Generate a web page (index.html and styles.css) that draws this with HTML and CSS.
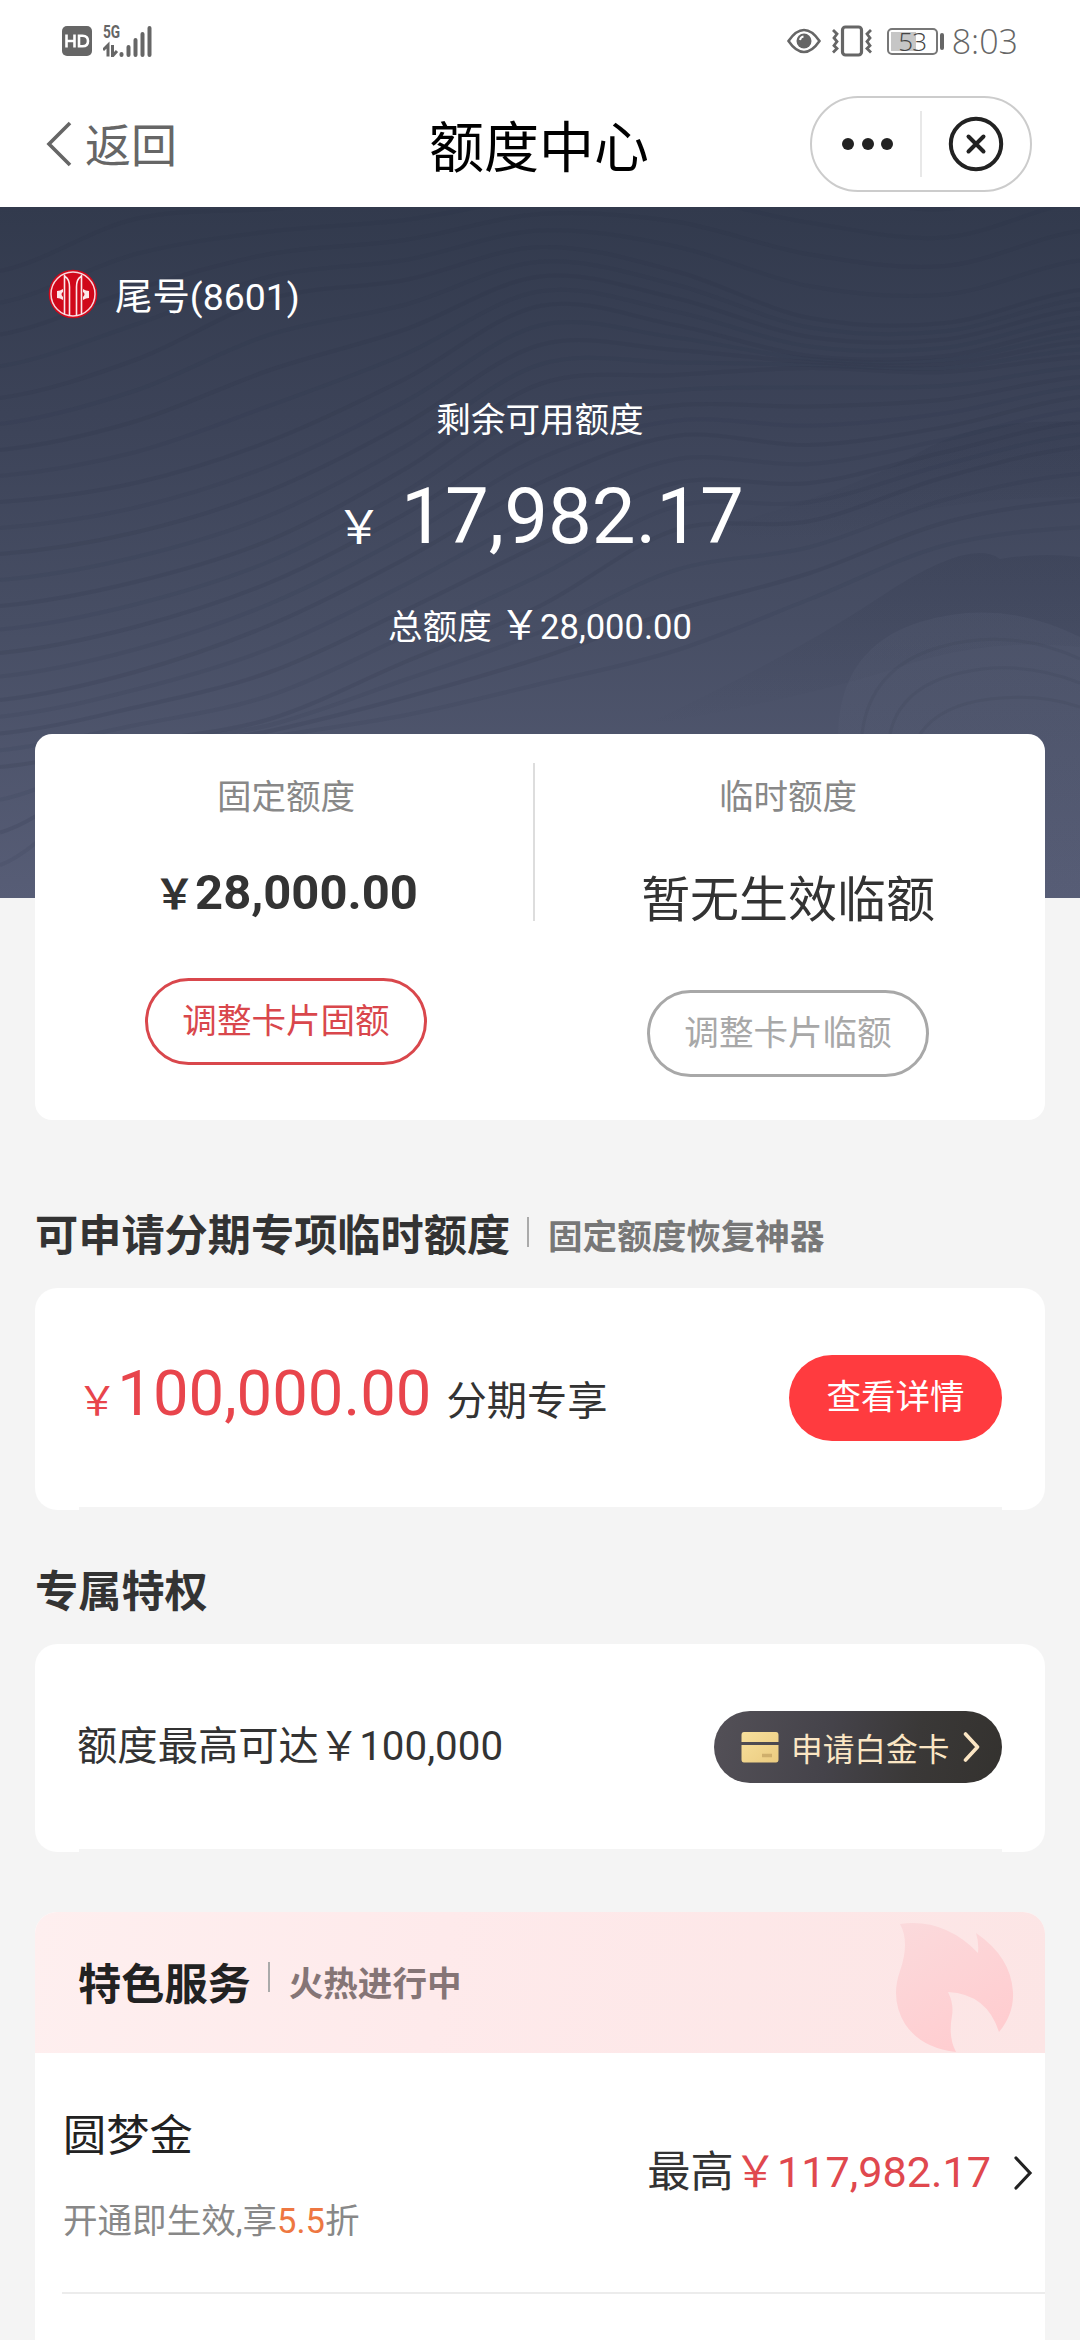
FILE: index.html
```html
<!DOCTYPE html>
<html lang="zh-CN">
<head>
<meta charset="utf-8">
<title>额度中心</title>
<link rel="stylesheet" href="styles.css">
</head>
<body>
<header class="top">
  <div class="status">
    <div class="status-left">
      <svg width="30" height="30" viewBox="0 0 30 30"><rect width="30" height="30" rx="5" fill="#666"/><path d="M4.500 8.500v13M12.500 8.500v13M4.500 15h8M17 9.700h3.500q5.500 0 5.500 5.300t-5.500 5.300H17z" fill="none" stroke="#fff" stroke-width="2.600"/></svg>
      <div class="net">
        <span class="net-label">5G</span>
        <svg width="50" height="32" viewBox="0 0 50 32"><path d="M0 25l5-5v11.500M9.500 20v11l4.500-5" fill="none" stroke="#666" stroke-width="3"/><path d="M18.500 29v1M25.500 22v8M32.500 15v15M39.500 9v21M46.500 3v27" stroke="#666" stroke-width="4" stroke-linecap="round"/></svg>
      </div>
    </div>
    <div class="status-right">
      <svg width="34" height="28" viewBox="0 0 34 28"><path d="M1.500 14Q9 3 17 3t15.500 11Q25 25 17 25T1.500 14z" fill="none" stroke="#666" stroke-width="2.600"/><circle cx="17" cy="14" r="7.500" fill="#666"/><path d="M13 13q.5-3 3.500-3.500" stroke="#fff" stroke-width="2" fill="none"/></svg>
      <svg class="vibrate" width="40" height="32" viewBox="0 0 40 32"><rect x="10.500" y="2" width="19" height="28" rx="3" fill="none" stroke="#666" stroke-width="3.200"/><path d="M1 5l4 4-3 4 3 3.500-3 4 3 3-4 4M39 5l-4 4 3 4-3 3.500 3 4-3 3 4 4" fill="none" stroke="#666" stroke-width="2.800"/></svg>
      <div class="battery"><span class="battery-body"><span class="battery-text">53</span></span><span class="battery-tip"></span></div>
      <span class="clock">8:03</span>
    </div>
  </div>
  <nav class="nav">
    <a class="back"><svg width="26" height="46" viewBox="0 0 26 46"><path d="M24 2L3 23l21 21" fill="none" stroke="#666" stroke-width="3.600"/></svg><span>返回</span></a>
    <h1 class="title">额度中心</h1>
    <div class="nav-end">
      <div class="capsule">
        <span class="capsule-cell"><svg width="54" height="14" viewBox="0 0 54 14"><g fill="#222"><circle cx="9" cy="7" r="6"/><circle cx="29" cy="7" r="6"/><circle cx="48" cy="7" r="6"/></g></svg></span>
        <span class="capsule-line"></span>
        <span class="capsule-cell"><svg width="56" height="56" viewBox="0 0 56 56" fill="none" stroke="#222" stroke-width="4"><circle cx="28" cy="28" r="25.200"/><path d="M20.500 20.500l15 15M35.500 20.500l-15 15" stroke-linecap="round"/></svg></span>
      </div>
    </div>
  </nav>
</header>

<section class="hero">
  <svg class="waves" id="waves" width="1080" height="691" viewBox="0 0 1080 691">
    <defs>
      <linearGradient id="ridge" x1="0" y1="0" x2="0" y2="1"><stop offset="0" stop-color="#2c3348" stop-opacity=".2"/><stop offset="1" stop-color="#2c3348" stop-opacity="0"/></linearGradient>
      <linearGradient id="bump" x1="0" y1="0" x2="0" y2="1"><stop offset="0" stop-color="#6a7188" stop-opacity=".14"/><stop offset="1" stop-color="#6a7188" stop-opacity="0"/></linearGradient>
    </defs>
    <path d="M640 520Q790 450 880 390T1000 352Q1040 345 1080 350V440Q990 430 900 460T640 520z" fill="url(#ridge)"/>
    <path d="M720 320Q860 280 920 245T1080 215V290Q950 290 860 320T720 320z" fill="url(#ridge)"/>
    <path d="M838 527Q840 440 920 415T1080 430V691H838z" fill="url(#bump)"/>
    <path d="M862 527Q870 460 940 440T1080 452M890 527Q900 480 960 466T1080 476M920 527Q940 498 990 492T1080 500" fill="none" stroke="#2f364b" stroke-opacity=".12" stroke-width="3"/>
  </svg>
  <div class="account">
    <svg width="50" height="50" viewBox="0 0 50 50"><circle cx="25" cy="25" r="24.300" fill="#d0081a"/><circle cx="25" cy="25" r="22" fill="none" stroke="#f7d5da" stroke-width="1.500"/><path d="M16.500 5.500V45M33.500 5.500V45M17 7.500Q21.500 10 21.500 18V47M33 7.500Q28.500 10 28.500 18V47" fill="none" stroke="#fbe6e9" stroke-width="1.600"/><path d="M15 20v3q-3 2 0 5v3q-3-2-6-2v-7q3 0 6-2zM35 20v3q3 2 0 5v3q3-2 6-2v-7q-3 0-6-2z" fill="#fbe6e9"/></svg>
    <span>尾号(8601)</span>
  </div>
  <p class="avail-label">剩余可用额度</p>
  <p class="avail"><span class="yen">￥</span><span class="avail-num">17,982.17</span></p>
  <p class="total"><span>总额度</span><span class="total-num"><span class="yen">￥</span>28,000.00</span></p>
</section>

<main>
  <section class="card limits">
    <div class="limit">
      <p class="limit-label">固定额度</p>
      <p class="limit-amount"><span class="yen">￥</span>28,000.00</p>
      <a class="pill pill-red">调整卡片固额</a>
    </div>
    <span class="limit-line"></span>
    <div class="limit">
      <p class="limit-label">临时额度</p>
      <p class="limit-none">暂无生效临额</p>
      <a class="pill pill-grey">调整卡片临额</a>
    </div>
  </section>

  <h2 class="heading heading-first">可申请分期专项临时额度<span class="bar"></span><small>固定额度恢复神器</small></h2>
  <section class="card offer">
    <p class="offer-amount"><span class="yen">￥</span><b>100,000.00</b><span class="offer-note">分期专享</span></p>
    <a class="detail">查看详情</a>
  </section>

  <h2 class="heading">专属特权</h2>
  <section class="card perk">
    <p class="perk-text">额度最高可达￥100,000</p>
    <a class="platinum">
      <svg width="38" height="31" viewBox="0 0 38 31"><defs><linearGradient id="gold" x1="0" y1="0" x2="1" y2="1"><stop offset="0" stop-color="#f7e09c"/><stop offset="1" stop-color="#ebcb80"/></linearGradient></defs><path d="M3 0h32q2.500 0 2.500 3v7H.5V3Q.5 0 3 0zM.5 13h37v14.500q0 3-2.500 3H3q-2.500 0-2.500-3z" fill="url(#gold)"/><path d="M21 23.500h10" stroke="#cfaf6c" stroke-width="3.500"/></svg>
      <span>申请白金卡</span>
      <svg width="18" height="30" viewBox="0 0 18 30"><path d="M3.500 2l12 13-12 13" fill="none" stroke="#fbe6c4" stroke-width="3.600" stroke-linecap="round" stroke-linejoin="round"/></svg>
    </a>
  </section>

  <section class="features">
    <h2 class="features-head"><span>特色服务</span><span class="bar"></span><small>火热进行中</small>
      <svg class="flame" width="118" height="131" viewBox="0 0 118 131"><defs><linearGradient id="fire" x1="0" y1="0" x2=".5" y2="1"><stop offset="0" stop-color="#fbdadc"/><stop offset="1" stop-color="#ffcdd0"/></linearGradient></defs><path d="M4 2Q48-4 82 31Q83 20 80 11Q115 35 117 70Q118 92 103 110Q91 72 52 70Q58 82 56 94Q52 115 60 130Q25 126 9 102Q-6 77 4 49Q14 20 4 2z" fill="url(#fire)"/></svg>
    </h2>
    <div class="feature">
      <div class="feature-info"><p class="feature-name">圆梦金</p><p class="feature-desc">开通即生效,享<em>5.5</em>折</p></div>
      <p class="feature-max">最高<em>￥117,982.17</em></p>
      <svg class="feature-go" width="20" height="34" viewBox="0 0 20 34"><path d="M3 2l14 15L3 32" fill="none" stroke="#222" stroke-width="3.200" stroke-linecap="round"/></svg>
    </div>
  </section>
</main>
<script src="waves.js"></script>
</body>
</html>
```
FILE: styles.css
```css
* { box-sizing: border-box; }
body {
  margin: 0;
  width: 1080px;
  height: 2340px;
  overflow: hidden;
  background: #f4f4f4;
  color: #333;
  font-family: Roboto, "Noto Sans CJK SC", sans-serif;
}
p, h1, h2 { margin: 0; font-weight: 400; }
em { font-style: normal; }
svg { display: block; flex: none; }

.top { height: 207px; background: #fff; }
.status {
  height: 82px;
  display: flex;
  justify-content: space-between;
  padding: 0 62px;
}
.status-left, .status-right { display: flex; align-items: center; }
.status-left { gap: 11px; }
.net { display: grid; width: 50px; height: 32px; }
.net > * { grid-area: 1 / 1; }
.net-label {
  font: 700 19px/14px "Roboto", sans-serif;
  color: #666;
  transform: scaleX(.72);
  transform-origin: left;
}
.status-right { color: #666; }
.vibrate { margin-left: 11px; }
.battery { display: flex; align-items: center; gap: 2px; margin-left: 15px; }
.battery-body {
  width: 51px;
  height: 27px;
  border: 2px solid #777;
  border-radius: 5px;
  padding: 2px;
  background: linear-gradient(#c6c6c6, #c6c6c6) 2px 2px / 25px 19px no-repeat;
  text-align: center;
}
.battery-text {
  display: block;
  font: 300 26px/19px "Open Sans", sans-serif;
  letter-spacing: -1px;
  color: #444;
}
.battery-tip { width: 4px; height: 17px; border-radius: 2px; background: #666; }
.clock { margin-left: 8px; font: 300 34px/40px "Open Sans", sans-serif; }

.nav {
  height: 125px;
  display: grid;
  grid-template-columns: 1fr auto 1fr;
  align-items: center;
  padding: 0 48px 0 46px;
}
.back { display: flex; align-items: center; gap: 13px; font-size: 46px; line-height: 66px; color: #666; }
.back svg { margin-top: -2px; }
.back span { padding-top: 2px; }
.title { font-size: 55px; line-height: 80px; color: #000; padding-top: 6px; }
.nav-end { display: flex; justify-content: flex-end; }
.capsule {
  display: flex;
  align-items: center;
  width: 222px;
  height: 96px;
  margin-top: -1px;
  border: 2px solid #ccc;
  border-radius: 48px;
}
.capsule-cell { flex: 1; display: flex; justify-content: center; }
.capsule-line { width: 2px; height: 66px; background: #e8e8e8; }

.hero {
  height: 691px;
  padding-top: 57px;
  background: linear-gradient(#323a4d, #3c4358 30%, #474e64 60%, #575d76);
  color: #fff;
  position: relative;
}
.waves { position: absolute; left: 0; top: 0; }
.hero > :not(.waves) { position: relative; }
.account { display: flex; align-items: center; gap: 17px; height: 60px; padding-left: 48px; font-size: 37.44px; }
.avail-label { margin-top: 70px; text-align: center; font-size: 34.56px; line-height: 52px; }
.avail { display: flex; justify-content: center; align-items: baseline; height: 96px; margin-top: 23px; line-height: 96px; gap: 19px; }
.avail .yen { font-size: 46px; }
.avail-num { font-size: 78px; }
.total { display: flex; justify-content: center; align-items: baseline; gap: 8px; margin-top: 31px; font-size: 34.56px; line-height: 60px; }
.total .yen { font-size: 40.32px; }

main { padding: 0 35px; }
.card { background: #fff; border-radius: 22px; }
.limits {
  position: relative;
  margin-top: -164px;
  height: 386px;
  border-radius: 17px;
  display: grid;
  grid-template-columns: 498px 2px 506px;
  padding-top: 29px;
}
.limit { display: flex; flex-direction: column; align-items: center; padding-left: 4px; }
.limit:last-child { padding-left: 0; }
.limit-line { width: 2px; height: 158px; background: #ddd; }
.limit-label { font-size: 34.56px; line-height: 50px; margin-top: 9px; color: #888; }
.limit-amount { height: 60px; margin-top: 41px; font-size: 48.96px; line-height: 60px; font-weight: 700; }
.limit-amount .yen { font-size: 41px; }
.limit-none { height: 72px; margin-top: 41px; font-size: 48.96px; line-height: 76px; }
.pill {
  width: 282px;
  height: 87px;
  margin-top: 55px;
  border: 3px solid;
  border-radius: 44px;
  font-size: 34.56px;
  line-height: 80px;
  text-align: center;
}
.pill-red { color: #d9474c; }
.pill-grey { color: #a8a8a8; }

.heading {
  display: flex;
  align-items: center;
  height: 134px;
  padding-top: 31px;
  font-size: 43.2px;
  font-weight: 700;
  line-height: 62px;
}
.heading-first { height: 168px; padding-top: 65px; }
.bar { width: 2px; height: 30px; margin: -9px 19px 0 17px; background: #aaa; }
small { font-size: 34.56px; color: #777; }

.offer, .perk {
  display: flex;
  justify-content: space-between;
  padding: 0 43px 0 42px;
  background: linear-gradient(#f4f4f4, #f4f4f4) 44px 100% / 923px 3px no-repeat #fff;
}
.offer { height: 222px; padding-top: 67px; }
.offer-amount { display: flex; align-items: baseline; height: 84px; line-height: 76px; }
.offer-amount .yen { font-size: 40.32px; color: #e8454c; }
.offer-amount b { font-size: 63.36px; font-weight: 400; color: #e8454c; }
.offer-note { font-size: 40.32px; margin-left: 15px; }
.detail {
  width: 213px;
  height: 86px;
  border-radius: 43px;
  background: #ff3b3f;
  color: #fff;
  text-align: center;
  font-size: 34.56px;
  line-height: 84px;
}
.perk { height: 208px; padding-top: 67px; }
.perk-text { font-size: 40.32px; line-height: 72px; }
.platinum {
  display: flex;
  align-items: center;
  width: 288px;
  height: 72px;
  padding-left: 27px;
  border-radius: 36px;
  background: linear-gradient(100deg, #535057, #45434a 40%, #3a3837 70%, #34322f);
  font-size: 31.68px;
  color: #fbe6c4;
}
.platinum span { margin: 0 13px 0 12px; }

.features { margin-top: 60px; height: 500px; background: #fff; border-radius: 22px 22px 0 0; }
.features-head {
  position: relative;
  display: flex;
  align-items: center;
  height: 141px;
  padding: 0 0 3px 43px;
  border-radius: 22px 22px 0 0;
  background: linear-gradient(100deg, #feefef, #feeaeb 40%, #fce5e5);
  font-size: 43.2px;
  font-weight: 700;
  color: #222;
}
.features-head small { color: #857576; }
.flame { position: absolute; left: 861px; top: 10px; }
.feature {
  display: flex;
  align-items: center;
  height: 241px;
  margin-left: 27px;
  border-bottom: 2px solid #ececec;
}
.feature-info { flex: 1; padding: 7px 0 0 1px; }
.feature-name { font-size: 43.2px; line-height: 62px; color: #222; }
.feature-desc { margin-top: 28px; font-size: 34.56px; line-height: 50px; color: #888; }
.feature-desc em { color: #ee7741; }
.feature-max { font-size: 43.2px; line-height: 62px; }
.feature-max em { color: #e0484e; }
.feature-go { margin: 0 12px 0 22px; }
```
FILE: waves.js
```js
// Contour lines of the hero: each row holds a curve's heights at nine even steps,
// and the lines between two rows are blended from them.
const rows = [
  [64, 12, 2, -7, -26, -35, -16, 2, -35],
  [191, 153, 92, 73, 40, 64, 111, 116, 83],
  [295, 276, 234, 172, 99, 118, 149, 149, 120],
  [399, 375, 333, 262, 177, 168, 161, 165, 150],
  [493, 465, 418, 352, 276, 229, 238, 220, 190],
  [560, 536, 512, 455, 399, 323, 314, 270, 240],
  [691, 560, 536, 526, 503, 484, 418, 361, 347]
];
const svg = document.getElementById('waves');
const step = 135;
const per = 4;
for (let r = 0; r < rows.length - 1; r++) {
  for (let k = 0; k < per; k++) {
    const t = k / per;
    const y = rows[r].map((v, i) => v + (rows[r + 1][i] - v) * t);
    let d = `M0 ${y[0]}`;
    for (let i = 0; i < y.length - 1; i++) {
      const a = (y[i + 1] - y[Math.max(i - 1, 0)]) / 6;
      const b = (y[Math.min(i + 2, y.length - 1)] - y[i]) / 6;
      d += `C${i * step + 45} ${y[i] + a} ${i * step + 90} ${y[i + 1] - b} ${(i + 1) * step} ${y[i + 1]}`;
    }
    const p = document.createElementNS('http://www.w3.org/2000/svg', 'path');
    p.setAttribute('d', d);
    p.setAttribute('fill', 'none');
    p.setAttribute('stroke', '#262d40');
    p.setAttribute('stroke-opacity', k % 2 ? '.09' : '.15');
    p.setAttribute('stroke-width', '4');
    svg.appendChild(p);
  }
}
```
